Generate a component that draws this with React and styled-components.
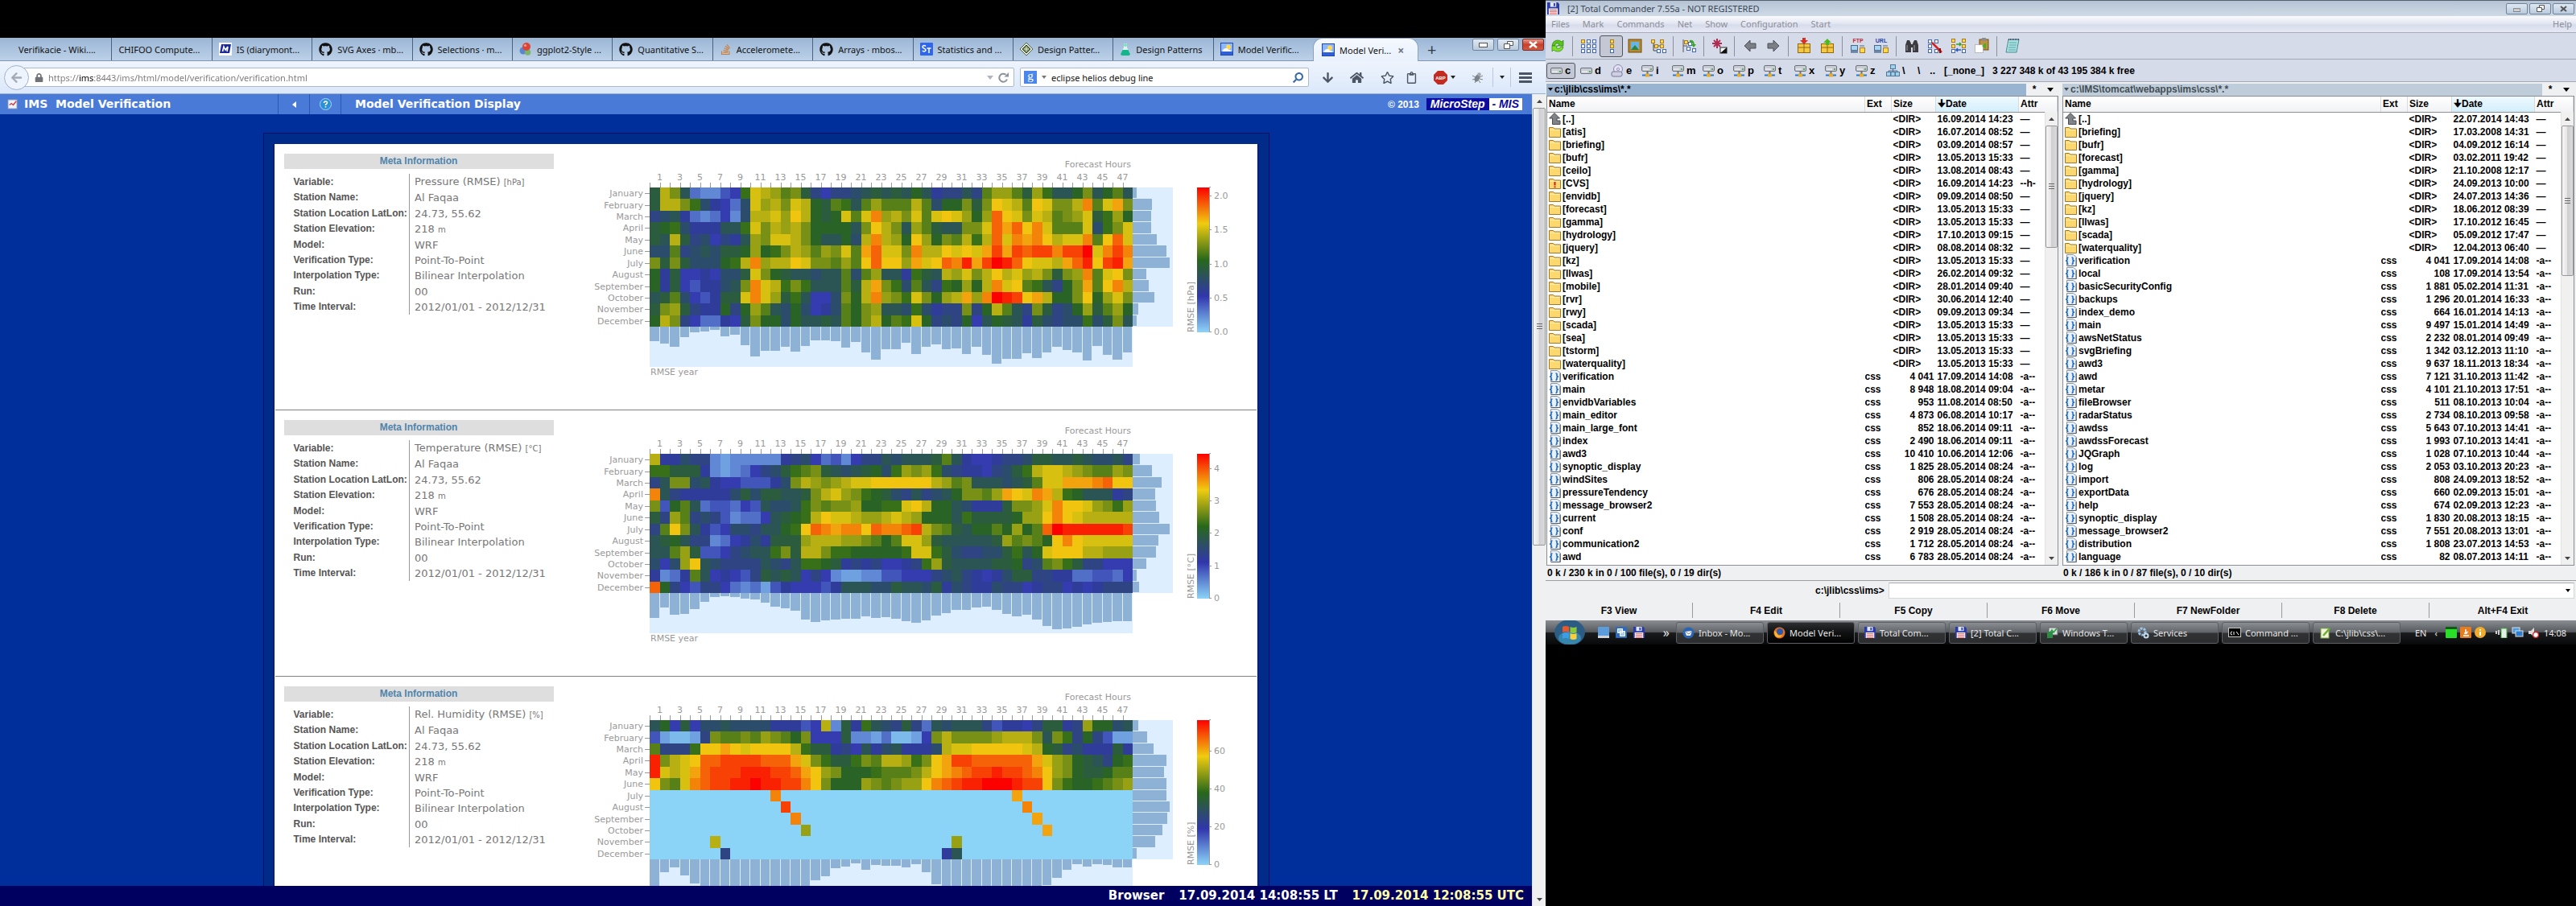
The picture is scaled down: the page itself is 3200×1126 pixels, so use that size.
import React from 'react';
import styled, { createGlobalStyle, css } from 'styled-components';
import { FaGithub, FaStackOverflow, FaLock, FaArrowLeft, FaArrowDown, FaHome, FaRegStar, FaRegClipboard, FaSearch } from 'react-icons/fa';

const ui = '"Noto Sans", "Open Sans", sans-serif';
const verdana = '"DejaVu Sans", sans-serif';
const arial = '"Liberation Sans", Arial, sans-serif';

const GlobalStyle = createGlobalStyle`
  * { box-sizing: border-box; }
  body { margin: 0; background: #000; }
  button { font: inherit; color: inherit; border: 0; background: none; padding: 0; }
  input { font: inherit; border: 0; outline: 0; background: none; padding: 0; min-width: 0; }
  a { color: inherit; text-decoration: none; }
  svg { display: block; flex: none; }
`;

const Desktop = styled.div`
  display: grid;
  grid-template-columns: 3fr 2fr;
  height: 100vh;
  overflow: hidden;
  background: #000;
`;

/* ---------- browser window ---------- */

const Browser = styled.section`
  display: flex;
  flex-direction: column;
  min-width: 0;
  min-height: 0;
  padding-top: 47px;
  font: 11px ${ui};
`;

const TabBar = styled.div`
  display: flex;
  height: 29px;
  background: linear-gradient(#9bb6d6, #bcd1e8);
  border-bottom: 1px solid #7d97b4;
`;

const Tabs = styled.nav`
  display: flex;
  flex: 1;
  min-width: 0;
  padding-left: 15px;
`;

const Tab = styled.a`
  display: flex;
  align-items: center;
  gap: 6px;
  flex: 1 1 0;
  min-width: 0;
  padding: 0 8px;
  white-space: nowrap;
  color: #111;
  border-right: 1px solid #4a6280;
  ${p => p.$active && css`
    flex: 0 0 131px;
    height: 29px;
    padding: 0 10px;
    background: linear-gradient(#f4f8fe, #e9f1fc);
    border: 1px solid #8aa2be;
    border-bottom: 0;
    border-radius: 12px 12px 0 0;
  `}
  ${p => p.$last && css`border-right: 0;`}
`;

const TabClose = styled.button`
  font-size: 14px;
  font-weight: 700;
  color: #6c7480;
  padding-left: 2px;
`;

const WindowTools = styled.div`
  display: flex;
  width: 158px;
  gap: 4px;
  padding: 1px 2px 0 0;
`;

const NewTab = styled.button`
  font-size: 20px;
  line-height: 24px;
  color: #333c48;
  padding-left: 11px;
  margin-right: auto;
`;

const WinButton = styled.button`
  display: flex;
  align-items: center;
  justify-content: center;
  width: ${p => p.$w || 27}px;
  height: ${p => p.$h || 15}px;
  border: 1px solid ${p => (p.$close ? '#7a2a22' : '#71839a')};
  border-radius: 2px;
  background: ${p => (p.$close ? 'linear-gradient(#e49a8c, #c8402c 50%, #d05a40)' : 'linear-gradient(#dfe8f2, #b9cadd)')};
`;

const NavBar = styled.div`
  display: flex;
  align-items: center;
  height: 41px;
  padding: 0 8px 0 5px;
  background: linear-gradient(#eef4fd, #dbe8fa);
  border-bottom: 1px solid #9db0ca;
`;

const BackButton = styled.button`
  display: grid;
  place-items: center;
  width: 31px;
  height: 31px;
  border-radius: 50%;
  border: 1px solid #9fb2cc;
  background: #eef4fd;
  color: #a3abb6;
  font-size: 15px;
  z-index: 1;
`;

const Field = styled.label`
  display: flex;
  align-items: center;
  gap: 6px;
  height: 24px;
  background: #fff;
  border: 1px solid #a9bad1;
  border-radius: 2px;
`;

const UrlField = styled(Field)`
  flex: 1;
  margin-left: -7px;
  padding: 0 6px 0 13px;
  color: #6f7276;
`;

const UrlInput = styled.input`
  flex: 1;
  background: linear-gradient(90deg, #777 0 38px, #000 38px 56px, #777 56px);
  background-clip: text;
  -webkit-background-clip: text;
  color: transparent;
`;

const SearchField = styled(Field)`
  width: 359px;
  margin: 0 12px 0 7px;
  padding: 0 6px 0 4px;
  input { flex: 1; color: #111; }
  svg { transform: scaleX(-1); color: #3a6ca8; font-size: 13px; }
`;

const GoogleMark = styled.span`
  width: 16px;
  height: 16px;
  background: #4a86ec;
  color: #fff;
  font: 15px/13px "Liberation Serif", serif;
  text-align: center;
`;

const Caret = styled.span`
  width: 0;
  height: 0;
  border: ${p => p.$s || 3}px solid transparent;
  border-top: ${p => (p.$s || 3) + 1}px solid ${p => p.$c || '#333'};
  border-bottom: 0;
`;

const Tools = styled.div`
  display: flex;
  align-items: center;
  color: #4b5563;
  font-size: 17px;
`;

const ToolButton = styled.button`
  display: flex;
  align-items: center;
  justify-content: center;
  gap: 4px;
  width: ${p => p.$w || 36}px;
  height: 24px;
  ${p => p.$line && css`border-left: 1px solid #b9c8de;`}
`;

const Burger = styled.span`
  width: 16px;
  height: 13px;
  border-top: 3px solid #4b5563;
  border-bottom: 3px solid #4b5563;
  background: linear-gradient(transparent 2px, #4b5563 2px 5px, transparent 5px);
`;

const Viewport = styled.div`
  display: flex;
  flex: 1;
  min-height: 0;
`;

const Page = styled.div`
  display: flex;
  flex-direction: column;
  flex: 1;
  min-width: 0;
  background: #002f9b;
`;

const PageHeader = styled.header`
  display: flex;
  align-items: stretch;
  height: 25px;
  background: #4a7ad8;
  color: #fff;
  font: bold 14px/25px ${verdana};
`;

const HeaderTitle = styled.div`
  display: flex;
  align-items: center;
  gap: 8px;
  width: 345px;
  padding-left: 9px;
  white-space: pre;
`;

const HeaderButton = styled.button`
  display: grid;
  place-items: center;
  width: 39px;
  border-left: 1px solid #2c56b4;
`;

const HeaderSection = styled.div`
  flex: 1;
  padding-left: 17px;
  border-left: 1px solid #2c56b4;
`;

const Copyright = styled.div`
  display: flex;
  align-items: center;
  gap: 9px;
  padding-right: 12px;
  font: bold 12px ${arial};
`;

const Brand = styled.span`
  display: flex;
  font: italic bold 14px/15px ${arial};
  b { background: #0c0ca0; padding: 0 5px; }
  i { background: #fff; color: #0c0ca0; padding: 0 4px; }
`;

const Scroll = styled.main`
  flex: 1;
  min-height: 0;
  overflow: hidden;
  padding-top: 23px;
`;

const Panel = styled.div`
  max-width: 1250px;
  margin: 0 auto;
  padding: 13px 13px 13px 12px;
  background: #002b88;
  border: 1px solid #00105c;
`;

const PanelBody = styled.div`
  background: #fff;
  border: 1px solid #00105c;
  border-top: 0;
  padding: 0 1px;
`;

const StationSection = styled.section`
  display: flex;
  gap: 31px;
  padding: 12px 11px 13px;
  border-bottom: 1px solid #808080;
`;

const Meta = styled.div`
  width: 335px;
`;

const MetaTitle = styled.h2`
  margin: 0 0 6px;
  background: #dedede;
  color: #4f84ab;
  text-align: center;
  font: bold 12px/19px ${arial};
`;

const MetaTable = styled.table`
  width: 335px;
  height: 175px;
  border-collapse: collapse;
  table-layout: fixed;
  th {
    width: 156px;
    padding: 0 0 0 12px;
    border-right: 1px solid #999;
    text-align: left;
    white-space: nowrap;
    color: #555;
    font: bold 12px/19px ${arial};
  }
  td {
    padding: 0 0 0 6px;
    white-space: nowrap;
    color: #777;
    font: 13px/19px ${verdana};
  }
  small { font-size: 10px; }
`;

const StatusBar = styled.footer`
  display: flex;
  justify-content: flex-end;
  gap: 18px;
  height: 25px;
  padding-right: 10px;
  background: #000060;
  color: #fff;
  font: bold 15px/25px ${verdana};
  em { font-style: normal; color: #ffffa8; }
`;

const ScrollTrack = styled.div`
  display: flex;
  flex-direction: column;
  align-items: center;
  width: ${p => p.$w || 17}px;
  background: #f0f0f1;
  border-left: 1px solid #e2e2e4;
`;

const ScrollArrow = styled.button`
  display: grid;
  place-items: center;
  width: 100%;
  height: 17px;
  flex: none;
`;

const ScrollThumb = styled.div`
  display: grid;
  place-items: center;
  width: 100%;
  height: ${p => p.$h};
  border: 1px solid #979797;
  border-radius: 2px;
  background: linear-gradient(90deg, #f6f6f6, #e6e6e8 45%, #cfcfd2 50%, #dadadc);
  margin-bottom: auto;
  &::after {
    content: '';
    width: 7px;
    height: 8px;
    background: repeating-linear-gradient(#666 0 1px, transparent 1px 3px);
  }
`;

const Tri = ({ up, color = '#444' }) => (
  <svg width="7" height="4" viewBox="0 0 7 4"><path d={up ? 'M0 4L3.500 0L7 4z' : 'M0 0h7L3.500 4z'} fill={color} /></svg>
);

const Scrollbar = ({ thumb, w }) => (
  <ScrollTrack $w={w}>
    <ScrollArrow aria-label="Scroll up"><Tri up /></ScrollArrow>
    <ScrollThumb $h={thumb} />
    <ScrollArrow aria-label="Scroll down"><Tri /></ScrollArrow>
  </ScrollTrack>
);

/* ---------- charts ---------- */

const ChartText = styled.g`
  font: 11px ${verdana};
  fill: #999;
`;

const stops = [[140, 211, 248], [48, 54, 172], [40, 104, 26], [240, 204, 16], [252, 0, 0]];

const cellColor = ch => {
  const v = ((ch.charCodeAt(0) - 97) / 25) * 4;
  const i = Math.min(3, Math.floor(v));
  const t = v - i;
  return `rgb(${stops[i].map((a, k) => Math.round(a + (stops[i + 1][k] - a) * t)).join(',')})`;
};

const months = ['January', 'February', 'March', 'April', 'May', 'June', 'July', 'August', 'September', 'October', 'November', 'December'];

const empty = marks => {
  const row = Array(48).fill('a');
  Object.entries(marks).forEach(([k, v]) => { row[k] = v; });
  return row.join('');
};

const datasets = [
  {
    id: 'pressure', variable: 'Pressure (RMSE)', unit: 'hPa', caption: 'RMSE year',
    ticks: [['2.0', 10], ['1.5', 52], ['1.0', 95], ['0.5', 137], ['0.0', 179]],
    rows: [
      'lrpkeddf gnsrqopl igiijklk lkmkhiik ioqqolqn kkmpkmok',
      'lrrpnjhg ejsqrpsr mlonkoqo oorojmmp lptsrots pprvosup',
      'ijkhedeg djrrsqtr mlmsosvq rpsostsq mqwtspsr opqslnqm',
      'lmnjhhhk knsprqrp mmmmkptr pkqolkkp pswuwtvs ooosjnps',
      'lkrlijgi hkqpssrp mkkmjrvr qmtqmpor nrwsvuvt rssvotws',
      'jjoijkjl lmqmnprq oqpsouws spvrrtst suxuxwxx vxxzsvxv',
      'plpljjjm nrvqrrts ppoqotwt tqustwvy uxzywtss ruwytxyu',
      'mhlgghgj jlspmlkk jkkojoqk khnlkrqs prtrsqrp lpqvostp',
      'mhlgfhhj kpvsrnpn kkkolrup njokinmq mrvstonk impuotvr',
      'klojgfhl lsvsqlnk ggjpmrvq pnspmqru qvzyxtur mmptmqsp',
      'lpqlihhm imqokjmj ghjompqk kjnjhiip imrokipl ijmqloqm',
      'mrpigeeh glpmmjmk klkomprm onsmijim gkmlkhlj ijjnjlpk',
    ],
    hours: [18, 21, 25, 13, 7, 6, 4, 12, 10, 23, 37, 30, 30, 25, 31, 24, 17, 17, 18, 26, 19, 32, 41, 28, 28, 20, 34, 25, 22, 28, 27, 34, 25, 35, 46, 40, 40, 33, 39, 32, 25, 29, 32, 42, 24, 35, 41, 32],
    totals: [5, 24, 23, 23, 30, 42, 46, 17, 20, 27, 7, 5],
  },
  {
    id: 'temperature', variable: 'Temperature (RMSE)', unit: '°C', caption: 'RMSE year',
    ticks: [['4', 18], ['3', 58], ['2', 98], ['1', 139], ['0', 179]],
    rows: [
      'rhhjiidc dddddhij gefdgiik jkkklokh gghiijll kklkjjki',
      'nnlllhdc degijlno plkjklmj nqpqnjih hgijlnrs srqpooqp',
      'ikppjkhg gfffhjpr qpqrsstt ttttrqop kkkjklos suuuvwtt',
      'vkihhhhh jljllkkl prsqpnml jikijkmp poqutsvu rnmkkkhi',
      'pfmokeff egfkjjkn poppqmmn nstrmmkj hhhlppqs vttsqpnq',
      'liqoijif deegklmn rtssrqqr srqmmmkn llllmqqt vtsrrrrr',
      'iotpkhfg jjikkmnt wvuvvtwv vwxrpolk mmomqmow zyyyyyyx',
      'klmkiide ghjhlllq rrrqqpom ossqlkkk kklqopom tvtsssss',
      'kkoqlffg ijkknplr rpnnmmmm mnssnlji ijjlnkms tttrrqqq',
      'jgjqtkji iiikjikn nmlhihig ghinqlkk kkllmijo pnliiggg',
      'hdehokgh gfilklkg igdccddf fgggijki hghjllii hheeffeg',
      'wmigfiig edecfhgg gfhkkkjj lkkjlhji hhjiighi ighghiii',
    ],
    hours: [31, 18, 27, 26, 20, 11, 5, 4, 5, 7, 8, 12, 17, 19, 22, 33, 36, 34, 33, 32, 32, 29, 31, 30, 32, 35, 37, 34, 28, 25, 21, 21, 18, 17, 21, 26, 29, 27, 33, 41, 45, 44, 42, 39, 37, 36, 35, 35],
    totals: [9, 24, 36, 28, 29, 33, 46, 32, 29, 17, 5, 8],
  },
  {
    id: 'humidity', variable: 'Rel. Humidity (RMSE)', unit: '%',
    ticks: [['60', 38], ['40', 85], ['20', 132], ['0', 179]],
    rows: [
      'kmglgjjk jjjjhhhf grdlhnkj iliekjkk kifhhgil lhiqmmjk',
      'fcbbcipo opoqpomp ggglddce bbcgprpp ppqrrrpk pnimifcc',
      'oiiinttu tsttttrn llhigkhj khhhjrss tttttsrm lijhhhlh',
      'yprstwwx xxxwwwus pnllnpor rqnptuxx wwwwwwus qpmlkimn',
      'ysrsuwxx xyyyxxwu tqpmmmno ooprtuvw xxyxxwvt qpmllmoo',
      'tposvwxx yyzyyxxv tpmmmqpo pqqtvwxy yzzzyxxt pnmmnopq',
      empty({ 12: 'v', 36: 'u' }),
      empty({ 13: 'x', 37: 'v' }),
      empty({ 14: 'v', 38: 'u' }),
      empty({ 15: 'q', 39: 'u' }),
      empty({ 6: 'r', 30: 'q' }),
      empty({ 7: 'i', 29: 'h', 30: 'k' }),
    ],
    hours: [34, 16, 10, 20, 30, 38, 41, 43, 44, 45, 46, 45, 44, 43, 40, 35, 26, 21, 11, 9, 5, 13, 7, 8, 8, 10, 6, 16, 31, 36, 38, 40, 42, 44, 44, 43, 41, 38, 36, 32, 23, 13, 6, 9, 6, 7, 10, 10],
    totals: [7, 18, 26, 42, 39, 42, 42, 46, 43, 37, 28, 5],
  },
];

const LEFT = 88;
const TOP = 42;
const CW = 12.5;
const MAP_H = 173;
const CH = MAP_H / 12;

const HeatMap = ({ data }) => (
  <svg width="820" height="305" viewBox="0 0 820 305" role="img" aria-label={data.variable}>
    <defs>
      <linearGradient id={`scale-${data.id}`} x1="0" y1="1" x2="0" y2="0">
        {stops.map((c, i) => <stop key={i} offset={i / 4} stopColor={`rgb(${c.join(',')})`} />)}
      </linearGradient>
    </defs>
    <rect x={LEFT + 600} y={TOP} width="50" height={MAP_H} fill="#dceeff" />
    <rect x={LEFT} y={TOP + MAP_H} width="600" height="50" fill="#dceeff" />
    <g shapeRendering="crispEdges">
      {data.rows.map((row, y) => row.replace(/ /g, '').split('').map((ch, x) => (
        <rect key={`${x}-${y}`} x={LEFT + x * CW} y={TOP + y * CH} width={CW} height={CH} fill={cellColor(ch)} />
      )))}
      {data.hours.map((h, x) => <rect key={x} x={LEFT + x * CW} y={TOP + MAP_H} width={CW - 1} height={h} fill="#8eb1d6" />)}
      {data.totals.map((w, y) => <rect key={y} x={LEFT + 600} y={TOP + y * CH} width={w} height={CH - 1} fill="#8eb1d6" />)}
      {data.hours.map((h, x) => <rect key={x} x={LEFT + x * CW} y={TOP - 6} width="1" height="6" fill="#999" />)}
      {months.map((m, y) => <rect key={m} x={LEFT - 6} y={TOP + (y + 0.5) * CH} width="6" height="1" fill="#999" />)}
    </g>
    <rect x="768" y={TOP} width="15" height="180" fill={`url(#scale-${data.id})`} />
    <path d={`M785 ${TOP - 0.5}h-1.500v180h1.500`} fill="none" stroke="#999" />
    <ChartText>
      <text x={LEFT + 598} y="17" textAnchor="end">Forecast Hours</text>
      {Array.from({ length: 24 }, (_, i) => i * 2 + 1).map(n => (
        <text key={n} x={LEFT + n * CW} y="33" textAnchor="middle">{n}</text>
      ))}
      {months.map((m, y) => <text key={m} x="80" y={TOP + (y + 0.5) * CH + 4} textAnchor="end">{m}</text>)}
      {data.caption && <text x={LEFT + 1} y="275">{data.caption}</text>}
      <text transform={`translate(764 ${TOP + 180}) rotate(-90)`}>RMSE [{data.unit}]</text>
      {data.ticks.map(([label, y]) => (
        <React.Fragment key={label}>
          <rect x="783" y={TOP + y} width="3" height="1" />
          <text x="789" y={TOP + y + 4}>{label}</text>
        </React.Fragment>
      ))}
    </ChartText>
  </svg>
);

const Station = ({ data }) => {
  const facts = [
    ['Variable:', <>{data.variable} <small>[{data.unit}]</small></>],
    ['Station Name:', 'Al Faqaa'],
    ['Station Location LatLon:', '24.73, 55.62'],
    ['Station Elevation:', <>218 <small>m</small></>],
    ['Model:', 'WRF'],
    ['Verification Type:', 'Point-To-Point'],
    ['Interpolation Type:', 'Bilinear Interpolation'],
    ['Run:', '00'],
    ['Time Interval:', '2012/01/01 - 2012/12/31'],
  ];
  return (
    <StationSection>
      <Meta>
        <MetaTitle>Meta Information</MetaTitle>
        <MetaTable><tbody>
          {facts.map(([k, v]) => <tr key={k}><th scope="row">{k}</th><td>{v}</td></tr>)}
        </tbody></MetaTable>
      </Meta>
      <HeatMap data={data} />
    </StationSection>
  );
};

/* ---------- icons ---------- */

const MicroIcon = () => (
  <svg width="16" height="16" viewBox="0 0 16 16"><rect width="16" height="16" fill="#fff" /><path d="M3 2h12l-2 11H1z" fill="#1a2a9c" /><path d="M4.500 11L6 5l2 4 3-4-1 6" fill="none" stroke="#fff" strokeWidth="1.600" /></svg>
);
const GgplotIcon = () => (
  <svg width="16" height="16" viewBox="0 0 16 16"><circle cx="5" cy="10" r="4.500" fill="#5a86d0" /><circle cx="10.500" cy="12" r="3.800" fill="#7cb46a" /><circle cx="9" cy="5" r="5" fill="#dc4438" /><circle cx="7.500" cy="3.500" r="1.600" fill="#f49a90" /></svg>
);
const StatIcon = () => (
  <svg width="16" height="16" viewBox="0 0 16 16"><rect width="16" height="16" rx="1" fill="#2f66ee" /><path d="M7 4.500C5.500 3 3 3.500 3 5.300 3 7.500 7 6.800 7 9.200 7 11 4.300 11.500 2.800 10M8.500 7h5M11 7v6" fill="none" stroke="#fff" strokeWidth="1.500" /></svg>
);
const DiamondIcon = () => (
  <svg width="16" height="16" viewBox="0 0 16 16"><path d="M8 0l8 8-8 8-8-8z" fill="#e6ebdd" stroke="#53604a" /><path d="M8 3l5 5-5 5-5-5z" fill="#738c5c" stroke="#2c3a22" /><path d="M8 5v6M5 8h6" stroke="#e6ebdd" /></svg>
);
const FlaskIcon = () => (
  <svg width="14" height="16" viewBox="0 0 14 16"><path d="M5 1h4v5l4 8q0 2-2 2H3q-2 0-2-2l4-8z" fill="#d9f5ec" /><path d="M3.500 9h7l2.500 5q0 2-2 2H3q-2 0-2-2z" fill="#14b48c" /><circle cx="7" cy="3" r="2" fill="#7fdcc2" /></svg>
);
const MapIcon = () => (
  <svg width="16" height="16" viewBox="0 0 16 16"><rect x=".5" y=".5" width="15" height="15" fill="#8cb8ff" stroke="#2248b0" /><circle cx="10" cy="5.500" r="3" fill="#ffd94a" /><path d="M2 12q1-5 5-5 3 0 3 2 3-1 4 3z" fill="#fff" /><path d="M1 11h14v4H1z" fill="#3060d8" /></svg>
);
const AdblockIcon = () => (
  <svg width="17" height="17" viewBox="0 0 17 17"><path d="M5 0h7l5 5v7l-5 5H5l-5-5V5z" fill="#c42a20" /><text x="8.500" y="11" fontSize="6" fontWeight="700" fontFamily="Liberation Sans, sans-serif" fill="#fff" textAnchor="middle">ABP</text></svg>
);
const BugIcon = () => (
  <svg width="16" height="16" viewBox="0 0 16 16"><ellipse cx="7" cy="9" rx="3" ry="5" transform="rotate(25 7 9)" fill="#7c8288" /><circle cx="9.500" cy="4.500" r="2.300" fill="#a4aab0" /><path d="M1 6l4 2M1 11l4-1M4 15l2-3M14 6l-4 2M14 11l-4-1M11 15l-2-3" stroke="#7c8288" /></svg>
);
const ReloadIcon = () => (
  <svg width="13" height="13" viewBox="0 0 13 13"><path d="M11 8.500A5 5 0 1 1 9.500 2.800" fill="none" stroke="#8a929c" strokeWidth="2" /><path d="M7.500 5.500H13V0z" fill="#8a929c" /></svg>
);
const PageIcon = () => (
  <svg width="13" height="13" viewBox="0 0 14 14"><rect x="1" y="1" width="12" height="12" fill="#eef2fa" stroke="#8292b4" /><path d="M3 8l2.500-2L8 8l4-5" fill="none" stroke="#d23c3c" strokeWidth="1.500" /></svg>
);
const HelpIcon = () => (
  <svg width="15" height="15" viewBox="0 0 15 15"><circle cx="7.500" cy="7.500" r="7" fill="#2c90d8" stroke="#a8d4f4" /><path d="M5.500 6Q5.500 4 7.500 4t2 1.800Q9.500 7 7.500 8v1M7.500 10v1.500" fill="none" stroke="#fff" strokeWidth="1.500" /></svg>
);

const Floppy = ({ s = 15 }) => (
  <svg width={s} height={s} viewBox="0 0 16 16"><path d="M0 0h14l2 2v14H0z" fill="#2a3aa8" /><rect x="4" width="8" height="6" fill="#dfe5ee" /><rect x="8.500" y="1" width="2" height="4" fill="#2a3aa8" /><rect x="2" y="8" width="12" height="8" fill="#fff" /><path d="M3 10h10M3 12.500h10M3 15h10" stroke="#d8303a" /></svg>
);
const Folder = ({ alert }) => (
  <svg width="15" height="14" viewBox="0 0 15 14"><path d="M.5 1.500h5l1.500 1.500h7.500v10.500H.5z" fill="#fbd870" stroke="#a8761c" /><path d="M1.500 4.500h12" stroke="#fff0b8" />{alert && <path d="M7.500 5v4.500M7.500 10.500v1.800" stroke="#c81e14" strokeWidth="2" />}</svg>
);
const CssFile = () => (
  <svg width="15" height="15" viewBox="0 0 15 15"><path d="M2.500.5h8l4 3v11h-12z" fill="#eaf1fa" stroke="#8a94a4" /><path d="M14 4v10.500H3" fill="none" stroke="#505860" /><path d="M4.500 4Q2.500 4 3 6T1 8q2.500.3 2 2.200T4.500 12.500M8.500 4q2 0 1.500 2t2 2q-2.500.3-2 2.200t-1.500 2.300" fill="none" stroke="#1e6cc8" strokeWidth="1.600" /></svg>
);
const UpDir = () => (
  <svg width="15" height="15" viewBox="0 0 15 15"><path d="M7 .5l6.500 6.500H10v3h4v4.500H4.500V7H.7z" fill="#808488" stroke="#484c50" /></svg>
);

const DriveIcon = ({ kind }) => {
  if (kind === 'cd') return (
    <svg width="16" height="16" viewBox="0 0 16 16"><circle cx="9" cy="6" r="5.500" fill="#e4e2f4" stroke="#8a88b0" /><circle cx="9" cy="6" r="1.500" fill="#fff" stroke="#8a88b0" /><rect x="1" y="9" width="13" height="6" rx="2" fill="#cfcfe4" stroke="#78789a" /></svg>
  );
  if (kind === 'tree') return (
    <svg width="17" height="16" viewBox="0 0 17 16"><path d="M8.500 5v4M3 11V8h11v3" fill="none" stroke="#4a6a8c" /><g fill="#a4d0ec" stroke="#4a7a9c"><rect x="5.500" y=".5" width="6" height="5" /><rect x=".5" y="9.500" width="5" height="5" /><rect x="6" y="9.500" width="5" height="5" /><rect x="11.500" y="9.500" width="5" height="5" /></g></svg>
  );
  const net = kind === 'net';
  return (
    <svg width="15" height="16" viewBox="0 0 15 16"><rect x=".5" y={net ? 1.5 : 4.5} width="14" height="7" rx="1.500" fill="#c8ccd4" stroke="#6c7078" /><path d={net ? 'M2 6h7' : 'M2 9h7'} stroke="#fff" /><path d={net ? 'M11 6h2' : 'M11 9h2'} stroke="#3aa03a" strokeWidth="1.500" />{net && <><path d="M7.500 9v3" stroke="#6c7078" strokeWidth="2" /><path d="M1 13.500h13" stroke="#2a78c8" strokeWidth="2" /><rect x="5" y="11.500" width="5" height="4" fill="#e8ac28" /></>}</svg>
  );
};

const Nodes = ({ pts }) => pts.map(([x, y, c]) => (
  <rect key={`${x}-${y}`} x={x + 0.5} y={y + 0.5} width="4" height="4" fill={c ? '#ffd850' : '#f4f8ff'} stroke={c ? '#a87c18' : '#4468b0'} />
));

const toolArt = {
  refresh: <><path d="M3 10Q4 3 10 3q3 0 5 2l2-2v7h-7l2-2Q8 5 6 10z" fill="#58c41c" stroke="#2c8408" strokeWidth=".7" /><path d="M17 11q-1 6-7 6-3 0-5-2l-2 2v-7h7l-2 2q4 3 6-1z" fill="#7ce02c" stroke="#2c8408" strokeWidth=".7" /></>,
  brief: <Nodes pts={[[1, 2, 1], [8, 2], [15, 2], [1, 8], [8, 8], [15, 8], [1, 14], [8, 14], [15, 14]]} />,
  full: <Nodes pts={[[8, 2, 1], [8, 8, 1], [8, 14]]} />,
  thumbs: <><rect x="2" y="2" width="16" height="16" fill="#b88a30" stroke="#6c4c10" /><rect x="5" y="5" width="10" height="10" fill="#68b4e4" /><path d="M5 15l5-6 5 6z" fill="#2c8440" /></>,
  tree: <><path d="M4 6v10M4 10h9M4 16h9" stroke="#444" fill="none" /><Nodes pts={[[1, 2, 1], [12, 2, 1], [5, 8, 1], [12, 8, 1], [8, 14], [15, 14]]} /></>,
  branch: <><path d="M3 2v16M3 10h5" stroke="#555" /><Nodes pts={[[4, 3, 1], [9, 5], [7, 11], [14, 13]]} /><path d="M11 3q5-1 6 5h2l-3 4-3-4h2q-1-3-4-3z" fill="#38a828" /></>,
  star: <><path d="M7 1v12M1 7h12M3 3l8 8M11 3l-8 8" stroke="#b02c50" strokeWidth="2" /><rect x="11" y="12" width="8" height="7" fill="#fff" stroke="#222" /><path d="M11 19l8-7v7z" fill="#111" /></>,
  back: <path d="M3 10l7-7v4h7v6h-7v4z" fill="#7c8086" stroke="#4c5056" />,
  forward: <path d="M17 10l-7-7v4H3v6h7v4z" fill="#7c8086" stroke="#4c5056" />,
  pack: <><rect x="2.500" y="7.500" width="15" height="11" fill="#f4c840" stroke="#946810" /><path d="M2 12h16M10 7v12" stroke="#946810" /><path d="M10 8L5 3h3V0h4v3h3z" fill="#d83020" /></>,
  unpack: <><rect x="2.500" y="7.500" width="15" height="11" fill="#f4c840" stroke="#946810" /><path d="M2 12h16M10 7v12" stroke="#946810" /><path d="M10 1l5 5h-3v3H8V6H5z" fill="#50b81c" /></>,
  ftp: <><text x="10" y="6" fontSize="7" fontWeight="700" fontFamily="Liberation Sans, sans-serif" textAnchor="middle" fill="#c02838">FTP</text><rect x="1.500" y="9.500" width="8" height="6" fill="#a8d4f0" stroke="#48688c" /><path d="M1 17.500h9" stroke="#48688c" strokeWidth="2" /><rect x="12.500" y="12.500" width="6" height="6" fill="#ffd850" stroke="#a87c18" /><path d="M12 10h6" stroke="#48688c" /></>,
  url: <><text x="10" y="6" fontSize="7" fontWeight="700" fontFamily="Liberation Sans, sans-serif" textAnchor="middle" fill="#2440a8">URL</text><rect x="1.500" y="9.500" width="8" height="6" fill="#a8d4f0" stroke="#48688c" /><path d="M1 17.500h9" stroke="#48688c" strokeWidth="2" /><rect x="12.500" y="12.500" width="6" height="6" fill="#ffd850" stroke="#a87c18" /><path d="M12 10h6" stroke="#48688c" /></>,
  find: <><path d="M4 3h3l2 4v11H2V9zM16 3h-3l-2 4v11h7V9z" fill="#3c3c40" /><path d="M8 8h4v4H8z" fill="#3c3c40" /><path d="M4 9v7M13 9v7" stroke="#a0a0a8" /></>,
  rename: <><Nodes pts={[[1, 2], [9, 2], [1, 8], [1, 14], [9, 14]]} /><path d="M6 6l12 12" stroke="#d02020" strokeWidth="2.500" /><path d="M16 13v6" stroke="#801010" strokeWidth="2" /></>,
  sync: <><Nodes pts={[[1, 1, 1], [14, 1, 1], [1, 8, 1], [14, 8, 1], [1, 14], [14, 14]]} /><path d="M7 8h6M11 6l2 2-2 2" stroke="#38a028" strokeWidth="1.500" fill="none" /><path d="M13 15H7M9 13l-2 2 2 2" stroke="#2858b8" strokeWidth="1.500" fill="none" /></>,
  copy: <><rect x="7" y="2" width="11" height="13" fill="#c0923c" stroke="#70501c" /><rect x="10" y="0" width="5" height="4" fill="#8c8c94" /><rect x="1.500" y="8.500" width="10" height="10" fill="#fff" stroke="#888" strokeDasharray="1 1" /><path d="M7 11l5-4v8z" fill="#48b024" transform="translate(3 -1)" /></>,
  notepad: <><path d="M5 2h13l-3 16H2z" fill="#a8e0e0" stroke="#4c8c90" /><path d="M6 6h9M6 9h9M5 12h9M5 15h9" stroke="#5ca8ac" /><path d="M5 2h13" stroke="#446" strokeWidth="2" strokeDasharray="1 1" /></>,
};

/* ---------- file manager ---------- */

const Right = styled.section`
  display: flex;
  flex-direction: column;
  min-width: 0;
`;

const Commander = styled.div`
  display: flex;
  flex-direction: column;
  background: #eff0f1;
  color: #000;
  font: bold 12px ${arial};
`;

const TitleBar = styled.div`
  display: flex;
  align-items: center;
  gap: 10px;
  height: 20px;
  padding: 0 2px;
  border-top: 1px solid #55606c;
  background: linear-gradient(#b4c3d4, #cfdae6);
  color: #3c4654;
`;

const TitleText = styled.h1`
  flex: 1;
  margin: 0;
  font: 11px ${ui};
`;

const WinButtons = styled.div`
  display: flex;
  gap: 2px;
`;

const MenuBar = styled.nav`
  display: flex;
  gap: 16px;
  height: 21px;
  padding: 0 5px 0 7px;
  background: linear-gradient(#fbfbfd, #e3e7f2 45%, #d7dcec 55%, #e6e9f4);
  border-bottom: 1px solid #a8acb8;
  font: 11px/20px ${ui};
  color: #8b8e97;
  a:last-child { margin-left: auto; }
`;

const Toolbar = styled.div`
  display: flex;
  align-items: center;
  height: 33px;
  background: #d6dbe9;
  border-bottom: 1px solid #a4a8b4;
`;

const Divider = styled.span`
  width: 1px;
  height: 25px;
  margin: 0 4px;
  background: #8c909c;
`;

const IconButton = styled.button`
  display: grid;
  place-items: center;
  width: 29px;
  height: 27px;
  ${p => p.$on && css`
    border: 1px solid #50545c;
    border-radius: 3px;
    background: #c3c8d4;
  `}
`;

const DriveBar = styled(Toolbar)`
  height: 28px;
  padding-left: 1px;
  gap: 2px;
`;

const DriveButton = styled.button`
  display: flex;
  align-items: center;
  gap: 3px;
  width: 36px;
  height: 20px;
  padding-left: 4px;
  font-size: 13px;
  ${p => p.$on && css`
    border: 1px solid #50545c;
    border-radius: 3px;
    background: #c3c8d4;
  `}
`;

const PlainButton = styled.button`
  padding: 0 5px;
`;

const FreeSpace = styled.span`
  padding-left: 4px;
  white-space: pre;
`;

const Panes = styled.div`
  display: grid;
  grid-template-columns: 1fr 1fr;
  gap: 5px;
  padding: 1px 2px 0 1px;
`;

const Pane = styled.section`
  min-width: 0;
`;

const PathRow = styled.div`
  display: flex;
  align-items: center;
  height: 16px;
`;

const Path = styled.button`
  display: flex;
  align-items: center;
  flex: 1;
  gap: 2px;
  height: 15px;
  padding-left: 2px;
  background: ${p => (p.$active ? '#99b4d1' : '#bfcddb')};
  color: ${p => (p.$active ? '#000' : '#434e54')};
`;

const PathButton = styled.button`
  display: grid;
  place-items: center;
  width: 20px;
`;

const ListBox = styled.div`
  position: relative;
  height: 584px;
  overflow: hidden;
  background: #fff;
  border: 1px solid #8c8e94;
`;

const ListScroll = styled.div`
  position: absolute;
  display: flex;
  top: 19px;
  right: 0;
  bottom: 0;
`;

const FileTable = styled.table`
  width: 100%;
  table-layout: fixed;
  border-collapse: collapse;
  th {
    height: 19px;
    padding: 0 2px;
    text-align: left;
    font-weight: bold;
    line-height: 16px;
    background: linear-gradient(#fff, #f1f2f4);
    border-right: 1px solid #d8dade;
    border-bottom: 1px solid #8c8e94;
  }
  th[aria-sort] { background: linear-gradient(#eef9fe, #d3effb); }
  td {
    height: 16px;
    padding: 0 2px 0 0;
    line-height: 16px;
    white-space: nowrap;
    overflow: hidden;
  }
  td + td + td + td { padding-left: 2px; }
`;

const Col = styled.col`
  width: ${p => p.$w}px;
`;

const NameCell = styled.span`
  display: flex;
  align-items: center;
  gap: 2px;
  height: 16px;
  padding-left: 2px;
`;

const SizeCell = styled.td`
  text-align: ${p => (p.$dir ? 'left' : 'right')};
  text-indent: ${p => (p.$dir ? 2 : 0)}px;
`;

const Summary = styled.div`
  height: 18px;
  line-height: 19px;
  padding-left: 1px;
`;

const CommandRow = styled.label`
  display: flex;
  align-items: center;
  height: 24px;
  padding: 0 2px 0 0;
  border-top: 1px solid #a0a0a0;
`;

const Prompt = styled.span`
  width: 33%;
  text-align: right;
  padding-right: 1px;
`;

const CommandBox = styled.span`
  display: flex;
  align-items: center;
  flex: 1;
  height: 20px;
  margin-left: 4px;
  padding: 0 4px;
  background: #fff;
  border: 1px solid #d4d6da;
  border-top-color: #a8aab0;
  input { flex: 1; }
`;

const FunctionKeys = styled.div`
  display: flex;
  height: 26px;
  align-items: center;
`;

const FunctionKey = styled.button`
  flex: 1;
  height: 19px;
  padding-top: 2px;
  & + & { border-left: 1px solid #9a9a9a; }
`;

const Taskbar = styled.footer`
  display: flex;
  align-items: center;
  height: 30px;
  background: linear-gradient(#8a8d91, #55585c 48%, #1a1b1d 52%, #08090a);
  color: #e8e8e8;
  font: 11px ${ui};
`;

const StartButton = styled.button`
  width: 42px;
  height: 30px;
  margin-left: 9px;
`;

const QuickLaunch = styled.div`
  display: flex;
  align-items: center;
  gap: 8px;
  width: 111px;
  padding-left: 14px;
  span { margin-left: auto; padding-right: 8px; line-height: 14px; font-size: 16px; }
`;

const Task = styled.button`
  display: flex;
  align-items: center;
  gap: 5px;
  width: 109px;
  height: 27px;
  margin-right: 4px;
  padding-left: 7px;
  border: 1px solid #5c5f63;
  border-radius: 3px;
  white-space: nowrap;
  background: ${p => (p.$on ? 'linear-gradient(#2c2e30, #101112 48%, #000)' : 'linear-gradient(#8a8d91, #606367 48%, #303234 52%, #2a2c2e)')};
`;

const Tray = styled.div`
  display: flex;
  align-items: center;
  gap: 4px;
  flex: 1;
  justify-content: flex-end;
  padding-right: 12px;
  span { margin-right: 6px; }
  time { margin-left: 2px; }
`;

const tabs = [
  ['Verifikacie - Wiki....', null],
  ['CHIFOO Compute...', null],
  ['IS (diarymont...', <MicroIcon />],
  ['SVG Axes · mb...', <FaGithub size={17} />],
  ['Selections · m...', <FaGithub size={17} />],
  ['ggplot2-Style ...', <GgplotIcon />],
  ['Quantitative S...', <FaGithub size={17} />],
  ['Acceleromete...', <FaStackOverflow size={15} color="#d07c34" />],
  ['Arrays · mbos...', <FaGithub size={17} />],
  ['Statistics and ...', <StatIcon />],
  ['Design Patter...', <DiamondIcon />],
  ['Design Patterns', <FlaskIcon />],
  ['Model Verific...', <MapIcon />],
];

const d = (name, date, attr = '—') => ({ name: `[${name}]`, dir: true, size: '<DIR>', date, attr, alert: name === 'CVS' });
const f = (name, size, date) => ({ name, ext: 'css', size, date, attr: '-a--' });

const leftFiles = [
  d('..', '16.09.2014 14:23'), d('atis', '16.07.2014 08:52'), d('briefing', '03.09.2014 08:57'),
  d('bufr', '13.05.2013 15:33'), d('ceilo', '13.08.2014 08:43'), d('CVS', '16.09.2014 14:23', '--h-'),
  d('envidb', '09.09.2014 08:50'), d('forecast', '13.05.2013 15:33'), d('gamma', '13.05.2013 15:33'),
  d('hydrology', '17.10.2013 09:15'), d('jquery', '08.08.2014 08:32'), d('kz', '13.05.2013 15:33'),
  d('llwas', '26.02.2014 09:32'), d('mobile', '28.01.2014 09:40'), d('rvr', '30.06.2014 12:40'),
  d('rwy', '09.09.2013 09:34'), d('scada', '13.05.2013 15:33'), d('sea', '13.05.2013 15:33'),
  d('tstorm', '13.05.2013 15:33'), d('waterquality', '13.05.2013 15:33'),
  f('verification', '4 041', '17.09.2014 14:08'), f('main', '8 948', '18.08.2014 09:04'),
  f('envidbVariables', '953', '11.08.2014 08:50'), f('main_editor', '4 873', '06.08.2014 10:17'),
  f('main_large_font', '852', '18.06.2014 09:11'), f('index', '2 490', '18.06.2014 09:11'),
  f('awd3', '10 410', '10.06.2014 12:06'), f('synoptic_display', '1 825', '28.05.2014 08:24'),
  f('windSites', '806', '28.05.2014 08:24'), f('pressureTendency', '676', '28.05.2014 08:24'),
  f('message_browser2', '7 553', '28.05.2014 08:24'), f('current', '1 508', '28.05.2014 08:24'),
  f('conf', '2 919', '28.05.2014 08:24'), f('communication2', '1 712', '28.05.2014 08:24'),
  f('awd', '6 783', '28.05.2014 08:24'),
];

const rightFiles = [
  d('..', '22.07.2014 14:43'), d('briefing', '17.03.2008 14:31'), d('bufr', '04.09.2012 16:14'),
  d('forecast', '03.02.2011 19:42'), d('gamma', '21.10.2008 12:17'), d('hydrology', '24.09.2013 10:00'),
  d('jquery', '24.07.2013 14:36'), d('kz', '18.06.2012 08:39'), d('llwas', '17.10.2012 16:45'),
  d('scada', '05.09.2012 17:47'), d('waterquality', '12.04.2013 06:40'),
  f('verification', '4 041', '17.09.2014 14:08'), f('local', '108', '17.09.2014 13:54'),
  f('basicSecurityConfig', '1 881', '05.02.2014 11:31'), f('backups', '1 296', '20.01.2014 16:33'),
  f('index_demo', '664', '16.01.2014 14:13'), f('main', '9 497', '15.01.2014 14:49'),
  f('awsNetStatus', '2 232', '08.01.2014 09:49'), f('svgBriefing', '1 342', '03.12.2013 11:10'),
  f('awd3', '9 637', '18.11.2013 18:34'), f('awd', '7 121', '31.10.2013 11:42'),
  f('metar', '4 101', '21.10.2013 17:51'), f('fileBrowser', '511', '08.10.2013 10:04'),
  f('radarStatus', '2 734', '08.10.2013 09:58'), f('awdss', '5 643', '07.10.2013 14:41'),
  f('awdssForecast', '1 993', '07.10.2013 14:41'), f('JQGraph', '1 028', '07.10.2013 10:44'),
  f('log', '2 053', '03.10.2013 20:23'), f('import', '808', '24.09.2013 18:52'),
  f('exportData', '660', '02.09.2013 15:01'), f('help', '674', '02.09.2013 12:23'),
  f('synoptic_display', '1 830', '20.08.2013 18:15'), f('message_browser2', '7 551', '20.08.2013 13:01'),
  f('distribution', '1 808', '23.07.2013 14:53'), f('language', '82', '08.07.2013 14:11'),
];

const FilePane = ({ path, active, files, thumb, summary }) => (
  <Pane>
    <PathRow>
      <Path $active={active}><Caret $c={active ? '#000' : '#434e54'} />{path}</Path>
      <PathButton>*</PathButton>
      <PathButton aria-label="History"><Caret $s={4} $c="#000" /></PathButton>
    </PathRow>
    <ListBox>
      <FileTable>
        <colgroup><col /><Col $w={33} /><Col $w={55} /><Col $w={103} /><Col $w={48} /></colgroup>
        <thead><tr><th>Name</th><th>Ext</th><th>Size</th><th aria-sort="descending">🠋Date</th><th>Attr</th></tr></thead>
        <tbody>
          {files.map(r => (
            <tr key={r.name}>
              <td><NameCell>{r.name === '[..]' ? <UpDir /> : r.dir ? <Folder alert={r.alert} /> : <CssFile />}{r.name}</NameCell></td>
              <td>{r.ext}</td>
              <SizeCell $dir={r.dir}>{r.size}</SizeCell>
              <td>{r.date}</td>
              <td>{r.attr}</td>
            </tr>
          ))}
        </tbody>
      </FileTable>
      <ListScroll><Scrollbar thumb={thumb} w={16} /></ListScroll>
    </ListBox>
    <Summary>{summary}</Summary>
  </Pane>
);

const toolGroups = [
  ['refresh'], ['brief', 'full', 'thumbs', 'tree'], ['branch'], ['star'], ['back', 'forward'],
  ['pack', 'unpack'], ['ftp', 'url'], ['find', 'rename', 'sync', 'copy'], ['notepad'],
];

const drives = [['c', 'disk'], ['d', 'disk'], ['e', 'cd'], ...'imoptxyz'.split('').map(x => [x, 'net']), ['\\', 'tree']];

const Square = ({ fill, children }) => (
  <svg width="14" height="14" viewBox="0 0 14 14"><rect width="14" height="14" rx="1" fill={fill} />{children}</svg>
);

const tasks = [
  ['Inbox - Mo...', <svg width="15" height="15" viewBox="0 0 15 15"><circle cx="7.500" cy="7.500" r="7" fill="#2c64b4" /><path d="M3 6l9-1-2 6H5z" fill="#f0f4fa" /><path d="M3 6l5 3 4-4" fill="none" stroke="#888" /></svg>],
  ['Model Veri...', <svg width="15" height="15" viewBox="0 0 15 15"><circle cx="7.500" cy="7.500" r="7" fill="#e8701c" /><circle cx="8" cy="6" r="4" fill="#2c58b0" /><path d="M1 5q3 1 4 4t6 1q-2 4-6 3T1 5z" fill="#fcb42c" /></svg>],
  ['Total Com...', <Floppy s={14} />],
  ['[2] Total C...', <Floppy s={14} />],
  ['Windows T...', <svg width="15" height="15" viewBox="0 0 15 15"><rect x="3" y="1" width="11" height="9" fill="#d8dce0" stroke="#666" /><path d="M4 8l3-4 2 3 4-5" stroke="#1ca03c" fill="none" strokeWidth="1.500" /><rect x="1" y="6" width="7" height="8" fill="#2c8c44" /></svg>],
  ['Services', <svg width="15" height="15" viewBox="0 0 15 15"><circle cx="6" cy="6" r="4" fill="none" stroke="#9cc4e8" strokeWidth="3" strokeDasharray="3 1" /><circle cx="11" cy="11" r="2.500" fill="none" stroke="#c4dcf0" strokeWidth="2" /></svg>],
  ['Command ...', <svg width="16" height="14" viewBox="0 0 16 14"><rect x=".5" y="1.500" width="15" height="11" fill="#000" stroke="#c8c8c8" /><path d="M5 6Q3 6 3 8t2 2M7 6v4M7 6h0M10 6l3 4" stroke="#fff" fill="none" /></svg>],
  ['C:\\jlib\\css\\...', <svg width="15" height="15" viewBox="0 0 15 15"><rect x="2" y="2" width="10" height="12" fill="#f4f4dc" stroke="#78a84c" /><path d="M5 11L13 2" stroke="#68b028" strokeWidth="2.500" /></svg>],
];

const TotalCommander = () => (
  <Commander>
    <TitleBar>
      <Floppy />
      <TitleText>[2] Total Commander 7.55a - NOT REGISTERED</TitleText>
      <WinButtons>
        <WinButton $h={14} aria-label="Minimize"><svg width="9" height="8"><rect y="4" width="9" height="3" fill="#fff" stroke="#555" /></svg></WinButton>
        <WinButton $h={14} aria-label="Restore"><svg width="10" height="9"><path d="M3.500 3V.5h6v5H7M.5 3.500h6v5h-6z" fill="#fff" stroke="#555" /></svg></WinButton>
        <WinButton $h={14} aria-label="Close"><svg width="9" height="8"><path d="M1 1l7 6M8 1L1 7" stroke="#555" strokeWidth="2" /></svg></WinButton>
      </WinButtons>
    </TitleBar>
    <MenuBar>
      {['Files', 'Mark', 'Commands', 'Net', 'Show', 'Configuration', 'Start', 'Help'].map(m => <a href="#menu" key={m}>{m}</a>)}
    </MenuBar>
    <Toolbar>
      {toolGroups.map((group, i) => (
        <React.Fragment key={group[0]}>
          {i > 0 && <Divider />}
          {group.map(name => (
            <IconButton key={name} $on={name === 'full'} aria-label={name}>
              <svg width="20" height="20" viewBox="0 0 20 20">{toolArt[name]}</svg>
            </IconButton>
          ))}
        </React.Fragment>
      ))}
    </Toolbar>
    <DriveBar>
      {drives.map(([letter, kind], i) => (
        <DriveButton key={letter} $on={i === 0}><DriveIcon kind={kind} />{letter}</DriveButton>
      ))}
      <PlainButton>\</PlainButton>
      <PlainButton>..</PlainButton>
      <FreeSpace>{'[_none_]   3 227 348 k of 43 195 384 k free'}</FreeSpace>
    </DriveBar>
    <Panes>
      <FilePane active path="c:\jlib\css\ims\*.*" files={leftFiles} thumb="152px" summary="0 k / 230 k in 0 / 100 file(s), 0 / 19 dir(s)" />
      <FilePane path="c:\IMS\tomcat\webapps\ims\css\*.*" files={rightFiles} thumb="187px" summary="0 k / 186 k in 0 / 87 file(s), 0 / 10 dir(s)" />
    </Panes>
    <CommandRow>
      <Prompt>c:\jlib\css\ims&gt;</Prompt>
      <CommandBox><input aria-label="Command line" /><Caret $c="#000" /></CommandBox>
    </CommandRow>
    <FunctionKeys>
      {['F3 View', 'F4 Edit', 'F5 Copy', 'F6 Move', 'F7 NewFolder', 'F8 Delete', 'Alt+F4 Exit'].map(k => <FunctionKey key={k}>{k}</FunctionKey>)}
    </FunctionKeys>
  </Commander>
);

export default function App() {
  return (
    <>
      <GlobalStyle />
      <Desktop>
        <Browser>
          <TabBar>
            <Tabs>
              {tabs.map(([label, icon], i) => (
                <Tab key={label} href="#tab" $last={i === tabs.length - 1}>{icon}{label}</Tab>
              ))}
              <Tab href="#tab" $active><MapIcon />Model Veri...<TabClose>×</TabClose></Tab>
            </Tabs>
            <WindowTools>
              <NewTab>+</NewTab>
              <WinButton aria-label="Minimize"><svg width="11" height="6"><rect x=".5" y=".5" width="10" height="5" fill="#fff" stroke="#555" /></svg></WinButton>
              <WinButton aria-label="Restore"><svg width="12" height="10"><path d="M4.500 3V.5h7v5H8M.5 3.500h7v6h-7z" fill="#fff" stroke="#555" /></svg></WinButton>
              <WinButton $close aria-label="Close"><svg width="11" height="9"><path d="M1 1l9 7M10 1L1 8" stroke="#fff" strokeWidth="2.500" /></svg></WinButton>
            </WindowTools>
          </TabBar>
          <NavBar>
            <BackButton aria-label="Back"><FaArrowLeft /></BackButton>
            <UrlField>
              <FaLock size={11} />
              <UrlInput aria-label="Address" defaultValue="https://ims:8443/ims/html/model/verification/verification.html" />
              <Caret $s={4} $c="#b0b6be" />
              <ReloadIcon />
            </UrlField>
            <SearchField>
              <GoogleMark>g</GoogleMark>
              <Caret $c="#777" />
              <input aria-label="Search" defaultValue="eclipse helios debug line" />
              <FaSearch />
            </SearchField>
            <Tools>
              <ToolButton $w={22} aria-label="Downloads"><FaArrowDown size={15} /></ToolButton>
              <ToolButton $w={50} aria-label="Home"><FaHome /></ToolButton>
              <ToolButton $w={26} aria-label="Bookmark"><FaRegStar /></ToolButton>
              <ToolButton $w={34} aria-label="Bookmarks menu"><FaRegClipboard size={15} /></ToolButton>
              <ToolButton $w={48} aria-label="Adblock"><AdblockIcon /><Caret $c="#222" /></ToolButton>
              <ToolButton $w={36} aria-label="Firebug"><BugIcon /></ToolButton>
              <ToolButton $w={22} $line aria-label="More"><Caret $c="#222" /></ToolButton>
              <ToolButton $w={36} $line aria-label="Menu"><Burger /></ToolButton>
            </Tools>
          </NavBar>
          <Viewport>
            <Page>
              <PageHeader>
                <HeaderTitle><PageIcon />{'IMS  Model Verification'}</HeaderTitle>
                <HeaderButton aria-label="Collapse"><svg width="5" height="8" viewBox="0 0 5 8"><path d="M5 0v8L0 4z" fill="#fff" /></svg></HeaderButton>
                <HeaderButton aria-label="Help"><HelpIcon /></HeaderButton>
                <HeaderSection>Model Verification Display</HeaderSection>
                <Copyright>© 2013 <Brand><b>MicroStep</b><i>- MIS</i></Brand></Copyright>
              </PageHeader>
              <Scroll>
                <Panel>
                  <PanelBody>
                    {datasets.map(data => <Station key={data.id} data={data} />)}
                  </PanelBody>
                </Panel>
              </Scroll>
              <StatusBar><span>Browser</span><span>17.09.2014 14:08:55 LT</span><em>17.09.2014 12:08:55 UTC</em></StatusBar>
            </Page>
            <Scrollbar thumb="544px" />
          </Viewport>
        </Browser>
        <Right>
          <TotalCommander />
          <Taskbar>
            <StartButton aria-label="Start">
              <svg width="42" height="30" viewBox="0 0 42 30"><ellipse cx="21" cy="15" rx="19" ry="16" fill="#2c5c84" /><ellipse cx="21" cy="22" rx="14" ry="8" fill="#3ca0c8" opacity=".6" /><path d="M12 8q4-2 8 0v7q-4-2-8 0z" fill="#e8582c" /><path d="M21.500 8q4 2 8 0v7q-4 2-8 0z" fill="#8cc83c" /><path d="M12 16q4-2 8 0v7q-4-2-8 0z" fill="#3c9ce4" /><path d="M21.500 16q4 2 8 0v7q-4 2-8 0z" fill="#fcd03c" /></svg>
            </StartButton>
            <QuickLaunch>
              <Square fill="#5c9cdc"><path d="M0 11h14v3H0z" fill="#d0d4d8" /></Square>
              <Square fill="#2c6cc0"><path d="M2.500 2.500h6v5h-6zM5.500 5.500h6v6h-6z" fill="#a8ccf0" stroke="#fff" /></Square>
              <Floppy s={14} />
              <span>»</span>
            </QuickLaunch>
            {tasks.map(([label, icon]) => <Task key={label} $on={label === 'Model Veri...'}>{icon}{label}</Task>)}
            <Tray>
              <span>EN</span>
              <span>‹</span>
              <Square fill="#28e028"><path d="M0 0h14v3H0z" fill="#0c5c14" /></Square>
              <Square fill="#e87c1c"><path d="M4 11h7M7 3v5l3-2M5 8h4" stroke="#fff" fill="none" strokeWidth="1.500" /></Square>
              <svg width="14" height="14" viewBox="0 0 14 14"><circle cx="7" cy="7" r="7" fill="#f0ac2c" /><path d="M7 6v5M7 3v1.500" stroke="#fff" strokeWidth="2" /></svg>
              <svg width="24" height="14" viewBox="0 0 24 14"><rect x="15" y="2" width="7" height="12" fill="#e4f0e4" stroke="#48a848" /><path d="M12 4v6M9 5v4" stroke="#ccc" strokeWidth="2" /></svg>
              <svg width="16" height="14" viewBox="0 0 16 14"><rect x="1" y="1" width="9" height="7" fill="#4c9ce4" stroke="#ddd" /><rect x="5" y="5" width="9" height="7" fill="#2c7cd0" stroke="#ddd" /></svg>
              <svg width="14" height="14" viewBox="0 0 14 14"><path d="M1 5h3l4-4v12L4 9H1z" fill="#ddd" /><circle cx="10" cy="10" r="3.500" fill="#fff" stroke="#d02424" strokeWidth="1.500" /></svg>
              <time>14:08</time>
            </Tray>
          </Taskbar>
        </Right>
      </Desktop>
    </>
  );
}
